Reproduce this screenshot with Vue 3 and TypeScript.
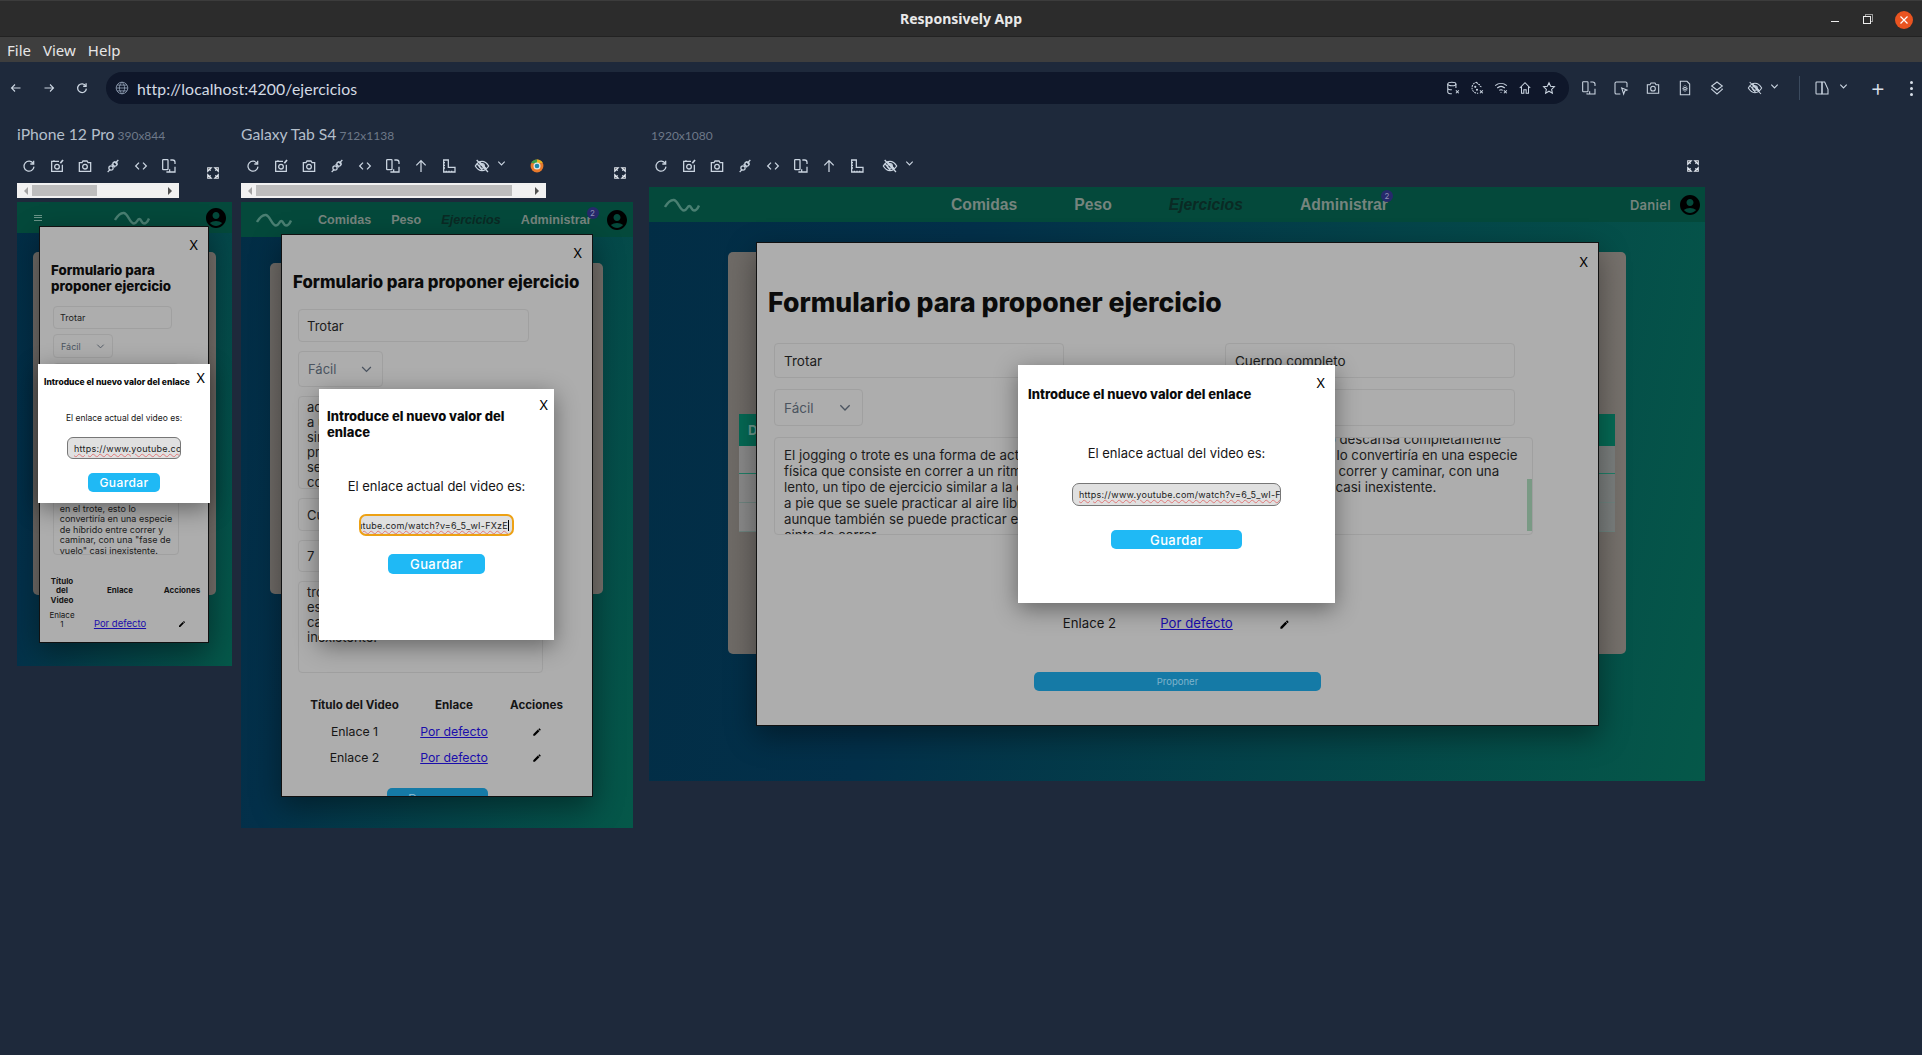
<script setup lang="ts">
const phoneTools = ['reload', 'shot', 'camera', 'plug', 'code', 'rotate']
const wideTools = ['reload', 'shot', 'camera', 'plug', 'code', 'rotate', 'up', 'ruler']
const urlIcons = ['db', 'cookie', 'wifi', 'home', 'star']

const joggingDesk = 'El jogging o trote es una forma de actividad\nfísica que consiste en correr a un ritmo\nlento, un tipo de ejercicio similar a la caminata\na pie que se suele practicar al aire libre,\naunque también se puede practicar en una\ncinta de correr'
const restDesk = 'Si la persona no descansa completamente\nen el trote, esto lo convertiría en una especie\nde híbrido entre correr y caminar, con una\n"fase de vuelo" casi inexistente.'
const joggingTab = 'actividad física que consiste\na un ritmo lento\nsimilar a la caminata\npractica al aire libre\nse puede practicar\ncorrer'
const restTab = 'trote, esto lo convertiría\nespecie de híbrido\ncaminar, con una\ninexistente.'
const restPhone = 'en el trote, esto lo\nconvertiría en una especie\nde híbrido entre correr y\ncaminar, con una "fase de\nvuelo" casi inexistente.'
const fullUrl = 'https://www.youtube.com/watch?v=6_5_wI-FXzE'
</script>

<template>
  <svg class="defs" aria-hidden="true">
    <symbol id="i-reload" viewBox="0 0 24 24"><path d="M18.5 8.5A7.5 7.5 0 1 0 19.5 13" /><path d="M19 4v5h-5" /></symbol>
    <symbol id="i-shot" viewBox="0 0 24 24"><path d="M15 5H4v15h16V10" /><circle cx="12" cy="13" r="3.5" /><path d="M7 5l1-1.5" /><path d="M17 8l4-5" stroke-width="2.6" /></symbol>
    <symbol id="i-camera" viewBox="0 0 24 24"><path d="M3.5 7h4L9 4.500h6L16.500 7h4v13h-17z" /><circle cx="12" cy="13" r="3.500" /></symbol>
    <symbol id="i-plug" viewBox="0 0 24 24"><path d="M4 21l4-4M20 3l-3 3M10 9l5 5M14 5.500l4.500 4.500" /><circle cx="9" cy="15" r="3.200" /><circle cx="15" cy="9" r="3.200" /></symbol>
    <symbol id="i-code" viewBox="0 0 24 24"><path d="M9 7l-5 5 5 5M15 7l5 5-5 5" /></symbol>
    <symbol id="i-rotate" viewBox="0 0 24 24"><rect x="2.500" y="2.500" width="8" height="15" rx="1" /><path d="M14 3h3.500a3.500 3.500 0 0 1 3.500 3.500V9" /><path d="M21 13v8H9v-1" /><path d="M13 21v-4" /></symbol>
    <symbol id="i-up" viewBox="0 0 24 24"><path d="M12 21V4M5 11l7-7 7 7" /></symbol>
    <symbol id="i-ruler" viewBox="0 0 24 24"><path d="M4 3h7v11h10v7H4z" /><path d="M4 7h2M4 11h2M4 15h2M8 21v-2M12 21v-2M16 21v-2" /></symbol>
    <symbol id="i-eye" viewBox="0 0 24 24"><path d="M2 12c3-5 6.500-7 10-7s7 2 10 7c-3 5-6.500 7-10 7s-7-2-10-7z" /><circle cx="12" cy="12" r="3.500" /><path d="M4 3l17 18M8 5.500l11 11M5 9l8 10" /></symbol>
    <symbol id="i-chev" viewBox="0 0 24 24"><path d="M5 8l7 7 7-7" /></symbol>
    <symbol id="i-full" viewBox="0 0 24 24"><path d="M3 3h6L3 9zM21 3h-6l6 6zM3 21h6l-6-6zM21 21h-6l6-6z" fill="currentColor" /><path d="M5 5l3 3M19 5l-3 3M5 19l3-3M19 19l-3-3" /></symbol>
    <symbol id="i-db" viewBox="0 0 24 24"><ellipse cx="10" cy="5" rx="7" ry="3" /><path d="M3 5v14c0 1.500 3 3 7 3M17 5v7M3 12c0 1.500 3 3 7 3" /><path d="M17 16l5 5M22 16l-5 5" /></symbol>
    <symbol id="i-cookie" viewBox="0 0 24 24"><path d="M12 2a9.500 9.500 0 1 0 2 19M12 2c0 3 2 4 4 4 0 2 2 4 4 4" stroke-dasharray="3 1.500" /><circle cx="9" cy="10" r="1" /><circle cx="12" cy="15" r="1" /><path d="M17 16l5 5M22 16l-5 5" /></symbol>
    <symbol id="i-wifi" viewBox="0 0 24 24"><path d="M2 8c6-5 14-5 20 0M5.500 12c4-3.500 9-3.500 13 0M9 16c2-1.500 4-1.500 6 0" /><path d="M12 19v1" /><path d="M17 16l5 5M22 16l-5 5" /></symbol>
    <symbol id="i-home" viewBox="0 0 24 24"><path d="M3 12l9-9 9 9M6 10v11h4v-6h4v6h4V10" /></symbol>
    <symbol id="i-star" viewBox="0 0 24 24"><path d="M12 3l2.800 6 6.500.8-4.800 4.500 1.300 6.500L12 17.500 6.200 20.800l1.300-6.500L2.700 9.800l6.500-.8z" /></symbol>
    <symbol id="i-inspect" viewBox="0 0 24 24"><path d="M11 21H5a2 2 0 0 1-2-2V5a2 2 0 0 1 2-2h14a2 2 0 0 1 2 2v6" /><path d="M13 12l8 3-3.500 1.500L16 21z" /></symbol>
    <symbol id="i-doc" viewBox="0 0 24 24"><path d="M5 2h10l4 4v16H5z" /><circle cx="12" cy="13" r="2" /><path d="M12 8v1M12 17v1M7.500 13h1M15.500 13h1M9 10l.6.6M15 10l-.6.6M9 16l.6-.6M15 16l-.6-.6" /></symbol>
    <symbol id="i-layers" viewBox="0 0 24 24"><path d="M12 3l8 6-8 6-8-6z" /><path d="M5 13l-1 1 8 7 8-7-1-1" /></symbol>
    <symbol id="i-split" viewBox="0 0 24 24"><rect x="3" y="3" width="9" height="18" rx="1" /><path d="M12 3h4l5 11v7h-9z" /></symbol>
    <symbol id="i-user" viewBox="0 0 24 24"><path fill-rule="evenodd" stroke="none" fill="currentColor" d="M12 2C6.480 2 2 6.480 2 12s4.480 10 10 10 10-4.480 10-10S17.520 2 12 2zm0 4c1.930 0 3.500 1.570 3.500 3.500S13.930 13 12 13s-3.500-1.570-3.500-3.500S10.070 6 12 6zm0 14c-2.030 0-4.430-.82-6.140-2.880C7.550 15.800 9.680 15 12 15s4.450.8 6.140 2.120C16.430 19.180 14.030 20 12 20z" /></symbol>
    <symbol id="i-pen" viewBox="0 0 24 24"><path stroke="none" fill="currentColor" d="M3 17.250V21h3.750L17.810 9.940l-3.750-3.750L3 17.250zm17.710-10.040a1 1 0 0 0 0-1.410l-2.340-2.340a1 1 0 0 0-1.410 0l-1.830 1.830 3.750 3.750 1.830-1.830z" /></symbol>
    <symbol id="i-logo" viewBox="0 0 36 14"><path d="M1 9C4 4 7 1.500 10 2c4 .7 6 10.500 10 10.500 3 0 3.500-5 5.500-4.500 2 .4 2 4.500 4.500 4.500 2.500 0 4-2.500 5-5" /></symbol>
  </svg>

  <div class="app">
    <header class="titlebar">
      <span class="title">Responsively App</span>
      <div class="winbtns">
        <i class="min"></i>
        <i class="restore"></i>
        <i class="close">
          <svg viewBox="0 0 10 10"><path d="M1.500 1.500l7 7M8.500 1.500l-7 7" /></svg>
        </i>
      </div>
    </header>
    <nav class="menubar">
      <span>File</span><span>View</span><span>Help</span>
    </nav>

    <div class="toolbar">
      <svg class="ic nav-ic" viewBox="0 0 24 24"><path d="M21 12H3M10 5l-7 7 7 7" /></svg>
      <svg class="ic nav-ic" viewBox="0 0 24 24"><path d="M3 12h18M14 5l7 7-7 7" /></svg>
      <svg class="ic nav-ic"><use href="#i-reload" /></svg>
      <div class="urlbar">
        <svg class="globe" viewBox="0 0 24 24"><circle cx="12" cy="12" r="10" /><path d="M2 12h20M3.500 7h17M3.500 17h17M12 2c-6 6-6 14 0 20M12 2c6 6 6 14 0 20" /></svg>
        <span class="url">http://localhost:4200/ejercicios</span>
        <div class="url-icons">
          <svg v-for="n in urlIcons" :key="n" class="ic small"><use :href="'#i-' + n" /></svg>
        </div>
      </div>
      <div class="top-tools">
        <svg class="ic"><use href="#i-rotate" /></svg>
        <svg class="ic"><use href="#i-inspect" /></svg>
        <svg class="ic"><use href="#i-camera" /></svg>
        <svg class="ic"><use href="#i-doc" /></svg>
        <svg class="ic"><use href="#i-layers" /></svg>
        <svg class="ic eye-top"><use href="#i-eye" /></svg>
        <svg class="chev"><use href="#i-chev" /></svg>
        <span class="divider"></span>
        <svg class="ic split"><use href="#i-split" /></svg>
        <svg class="chev"><use href="#i-chev" /></svg>
        <span class="plus">+</span>
        <span class="dots"><b></b><b></b><b></b></span>
      </div>
    </div>

    <main class="previews">
      <!-- iPhone -->
      <section class="pane phone">
        <div class="label">iPhone 12 Pro<small>390x844</small></div>
        <div class="tools">
          <svg v-for="t in phoneTools" :key="t" class="ic"><use :href="'#i-' + t" /></svg>
          <svg class="full"><use href="#i-full" /></svg>
        </div>
        <div class="hscroll"><span class="larr"></span><span class="thumb"></span><span class="rarr"></span></div>
        <div class="viewport">
          <div class="appnav">
            <span class="burger"><b></b><b></b><b></b></span>
            <svg class="logo"><use href="#i-logo" /></svg>
            <svg class="user"><use href="#i-user" /></svg>
          </div>
          <div class="card"></div>
          <div class="modal">
            <span class="x">X</span>
            <h2>Formulario para proponer ejercicio</h2>
            <div class="form">
              <div class="field f-a">Trotar</div>
              <div class="field sel f-b">Fácil<svg class="sel-chev"><use href="#i-chev" /></svg></div>
              <div class="field area f-c"><p>{{ restPhone }}</p></div>
            </div>
            <table class="links">
              <thead><tr><th>Título del Video</th><th>Enlace</th><th>Acciones</th></tr></thead>
              <tbody>
                <tr><td>Enlace 1</td><td><a>Por defecto</a></td><td><svg class="pen"><use href="#i-pen" /></svg></td></tr>
              </tbody>
            </table>
          </div>
          <div class="dialog">
            <span class="x">X</span>
            <h3>Introduce el nuevo valor del enlace</h3>
            <p class="cur">El enlace actual del video es:</p>
            <div class="linkinput"><span>{{ fullUrl }}</span></div>
            <button class="save">Guardar</button>
          </div>
        </div>
      </section>

      <!-- Tablet -->
      <section class="pane tablet">
        <div class="label">Galaxy Tab S4<small>712x1138</small></div>
        <div class="tools">
          <svg v-for="t in wideTools" :key="t" class="ic"><use :href="'#i-' + t" /></svg>
          <svg class="ic eye"><use href="#i-eye" /></svg>
          <svg class="chev"><use href="#i-chev" /></svg>
          <svg class="chrome" viewBox="0 0 24 24">
            <circle cx="12" cy="12" r="11" fill="#e8792b" />
            <path d="M12 1a11 11 0 0 1 10 6H12z" fill="#e6b422" />
            <path d="M2 7a11 11 0 0 1 10-6v7z" fill="#3ea04a" />
            <circle cx="12" cy="12" r="6" fill="#dfe7ea" />
            <circle cx="12" cy="12" r="4" fill="#1b87a8" />
          </svg>
          <svg class="full"><use href="#i-full" /></svg>
        </div>
        <div class="hscroll"><span class="larr"></span><span class="thumb"></span><span class="rarr"></span></div>
        <div class="viewport">
          <div class="appnav">
            <svg class="logo"><use href="#i-logo" /></svg>
            <div class="links-nav">
              <a>Comidas</a><a>Peso</a><a class="on">Ejercicios</a>
              <a class="adm">Administrar<em>2</em></a>
            </div>
            <svg class="user"><use href="#i-user" /></svg>
          </div>
          <div class="card"></div>
          <div class="modal">
            <span class="x">X</span>
            <h2>Formulario para proponer ejercicio</h2>
            <div class="form">
              <div class="field f-a">Trotar</div>
              <div class="field sel f-b">Fácil<svg class="sel-chev"><use href="#i-chev" /></svg></div>
              <div class="field area f-c"><p>{{ joggingTab }}</p></div>
              <div class="field f-d">Cuerpo completo</div>
              <div class="field f-e">7</div>
              <div class="field area f-f"><p>{{ restTab }}</p></div>
            </div>
            <table class="links">
              <thead><tr><th>Título del Video</th><th>Enlace</th><th>Acciones</th></tr></thead>
              <tbody>
                <tr><td>Enlace 1</td><td><a>Por defecto</a></td><td><svg class="pen"><use href="#i-pen" /></svg></td></tr>
                <tr><td>Enlace 2</td><td><a>Por defecto</a></td><td><svg class="pen"><use href="#i-pen" /></svg></td></tr>
              </tbody>
            </table>
            <button class="propose">Proponer</button>
          </div>
          <div class="dialog">
            <span class="x">X</span>
            <h3>Introduce el nuevo valor del enlace</h3>
            <p class="cur">El enlace actual del video es:</p>
            <div class="linkinput focus"><span>{{ fullUrl }}</span></div>
            <button class="save">Guardar</button>
          </div>
        </div>
      </section>

      <!-- Desktop -->
      <section class="pane desk">
        <div class="label"><small>1920x1080</small></div>
        <div class="tools">
          <svg v-for="t in wideTools" :key="t" class="ic"><use :href="'#i-' + t" /></svg>
          <svg class="ic eye"><use href="#i-eye" /></svg>
          <svg class="chev"><use href="#i-chev" /></svg>
          <svg class="full"><use href="#i-full" /></svg>
        </div>
        <div class="viewport">
          <div class="appnav">
            <svg class="logo"><use href="#i-logo" /></svg>
            <div class="links-nav">
              <a>Comidas</a><a>Peso</a><a class="on">Ejercicios</a>
              <a class="adm">Administrar<em>2</em></a>
            </div>
            <span class="who">Daniel</span>
            <svg class="user"><use href="#i-user" /></svg>
          </div>
          <div class="card">
            <div class="bgtable">
              <div class="bg-head">D</div>
              <div class="bg-row green"></div>
              <div class="bg-row"></div>
              <div class="bg-row"></div>
            </div>
          </div>
          <div class="modal">
            <span class="x">X</span>
            <h2>Formulario para proponer ejercicio</h2>
            <div class="form">
              <div class="field f-a">Trotar</div>
              <div class="field f-d">Cuerpo completo</div>
              <div class="field sel f-b">Fácil<svg class="sel-chev"><use href="#i-chev" /></svg></div>
              <div class="field f-e"></div>
              <div class="field area f-c"><p>{{ joggingDesk }}</p></div>
              <div class="field area f-f"><p>{{ restDesk }}</p><span class="sbar"></span></div>
            </div>
            <table class="links">
              <thead><tr><th>Título del Video</th><th>Enlace</th><th>Acciones</th></tr></thead>
              <tbody>
                <tr class="hidden-row"><td>Enlace 1</td><td><a>Por defecto</a></td><td><svg class="pen"><use href="#i-pen" /></svg></td></tr>
                <tr><td>Enlace 2</td><td><a>Por defecto</a></td><td><svg class="pen"><use href="#i-pen" /></svg></td></tr>
              </tbody>
            </table>
            <button class="propose">Proponer</button>
          </div>
          <div class="dialog">
            <span class="x">X</span>
            <h3>Introduce el nuevo valor del enlace</h3>
            <p class="cur">El enlace actual del video es:</p>
            <div class="linkinput"><span>{{ fullUrl }}</span></div>
            <button class="save">Guardar</button>
          </div>
        </div>
      </section>
    </main>
  </div>
</template>

<style scoped>
.defs { position: absolute; width: 0; height: 0; }

.app {
  width: 1922px;
  height: 1055px;
  background: #1e293b;
  overflow: hidden;
  font-family: Inter, "Liberation Sans", sans-serif;
  color: #111;
}

.titlebar {
  height: 37px;
  box-sizing: border-box;
  border-top: 1px solid #3c3c3c;
  background: #2c2c2c;
  border-bottom: 1px solid #222;
  display: flex;
  align-items: center;
  justify-content: center;
  position: relative;
}
.title { font: 700 14px "Noto Sans", sans-serif; color: #e9e9e9; }
.winbtns { position: absolute; right: 9px; top: 0; height: 37px; display: flex; align-items: center; }
.winbtns i { display: block; }
.min { width: 8px; height: 1px; background: #eee; margin: 4px 24px 0 0; }
.restore { width: 6px; height: 6px; border: 1px solid #eee; margin-right: 24px; box-shadow: 2px -2px 0 -1px #2c2c2c, 2px -2px 0 0 #999; }
.close { width: 18px; height: 18px; border-radius: 50%; background: #e95420; display: flex !important; align-items: center; justify-content: center; }
.close svg { width: 10px; height: 10px; fill: none; stroke: #fff; stroke-width: 1.2; }

.menubar {
  height: 25px;
  background: #3e3e3e;
  display: flex;
  align-items: center;
  gap: 12px;
  padding-left: 7px;
  font: 15px "Noto Sans", sans-serif;
  color: #e6e6e6;
}

.ic {
  width: 24px;
  height: 24px;
  padding: 4px;
  box-sizing: border-box;
  fill: none;
  stroke: #cbd5e1;
  stroke-width: 2;
  flex: none;
}
.chev { width: 11px; height: 11px; fill: none; stroke: #cbd5e1; stroke-width: 2.5; flex: none; }

.toolbar {
  height: 52px;
  padding: 10px 0 0 4px;
  box-sizing: border-box;
  display: flex;
  align-items: flex-start;
}
.toolbar > .ic { margin: 4px 9px 0 0; }
.toolbar > .nav-ic { padding: 6px; stroke-width: 2.2; }
.toolbar > .ic:nth-of-type(3) { margin-right: 12px; padding: 5px; }
.urlbar {
  width: 1463px;
  height: 32px;
  flex: none;
  border-radius: 16px;
  background: #0f172a;
  display: flex;
  align-items: center;
  padding: 0 8px 0 9px;
  box-sizing: border-box;
}
.globe { width: 14px; height: 14px; fill: none; stroke: #94a3b8; stroke-width: 1.4; }
.url { margin-left: 8px; font: 15.800px Lato, sans-serif; color: #d4dbe4; letter-spacing: .1px; }
.url-icons { margin-left: auto; display: flex; }
.ic.small { width: 24px; height: 24px; padding: 5px; stroke-width: 1.8; }
.top-tools { display: flex; align-items: center; height: 32px; margin-left: 8px; }
.top-tools > .ic { margin-right: 8px; stroke-width: 1.6; }
.top-tools > .ic.eye-top { margin: 0 2px 0 6px; }
.top-tools > .chev { margin-top: -4px; }
.divider { width: 1px; height: 24px; background: #3b4a5e; margin: 0 10px 0 19px; }
.top-tools > .ic.split { margin-right: 4px; }
.plus { margin-left: 21px; font: 300 24px/24px Inter, sans-serif; color: #d8dfe8; }
.dots { margin-left: 24px; display: flex; flex-direction: column; gap: 3px; }
.dots b { width: 3px; height: 3px; border-radius: 50%; background: #d8dfe8; }

.previews { display: flex; align-items: flex-start; padding-left: 17px; }
.pane { flex: none; padding-top: 10px; }
.phone { width: 215px; margin-right: 9px; }
.tablet { width: 392px; margin-right: 16px; }
.desk { width: 1056px; }

.label { height: 20px; font: 15.700px/20px Lato, sans-serif; color: #b4bfcb; margin-bottom: 10px; white-space: nowrap; }
.label small { font-size: 12px; color: #6d7888; margin-left: 3px; }
.desk .label small { margin-left: 2px; }

.tools { height: 29px; display: flex; align-items: flex-start; gap: 4px; }
.tools .ic { stroke-width: 1.9; padding: 4px; }
.tools .eye { margin-left: 5px; }
.tools .chev { margin: 4px 0 0 -2px; }
.chrome { width: 14px; height: 16px; margin: 4px 0 0 19px; }
.full { width: 14px; height: 14px; margin: 12px 0 0 auto; fill: none; stroke: #e2e8f0; stroke-width: 2; }
.phone .full { margin-right: 12px; }
.tablet .full { margin-right: 6px; }
.desk .tools { height: 33px; }
.desk .full { margin: 5px 5px 0 auto; }

.hscroll { height: 15px; background: #f1f1f1; display: flex; align-items: center; position: relative; margin-bottom: 4px; }
.phone .hscroll { width: 162px; }
.tablet .hscroll { width: 305px; }
.thumb { position: absolute; top: 2px; bottom: 2px; background: #bdbdbd; }
.phone .thumb { left: 15px; width: 65px; }
.tablet .thumb { left: 15px; width: 256px; }
.larr, .rarr { position: absolute; top: 4px; width: 0; height: 0; border: 4px solid transparent; }
.larr { left: 3px; border-right-color: #a3a3a3; }
.rarr { right: 3px; border-left-color: #505050; }

.viewport {
  position: relative;
  overflow: hidden;
  background: linear-gradient(102deg, #022d45 0%, #03304a 28%, #055849 100%);
}
.phone .viewport { height: 464px; }
.tablet .viewport { height: 626px; }
.desk .viewport { height: 594px; }

.appnav { display: flex; align-items: center; background: #04493b; }
.phone .appnav { height: 31px; padding: 0 4px 0 17px; }
.tablet .appnav { height: 35px; padding: 0 4px 0 15px; }
.desk .appnav { height: 35px; padding: 0 3px 0 15px; }

.logo { width: 36px; height: 14px; fill: none; stroke: #4a7f72; stroke-width: 2.4; flex: none; }
.user { width: 24px; height: 24px; color: #000; margin-left: auto; flex: none; }
.burger { display: flex; flex-direction: column; gap: 1.5px; margin-right: 72px; }
.burger b { width: 8px; height: 1px; background: #6a9488; }

.links-nav { display: flex; align-items: center; font-family: "Liberation Sans", Arial, sans-serif; font-weight: 700; color: #76847e; }
.links-nav a { white-space: nowrap; }
.links-nav .on { color: #0a2a24; font-style: italic; }
.adm { position: relative; }
.adm em {
  position: absolute;
  right: -5px;
  top: -6px;
  width: 12px;
  height: 12px;
  border-radius: 50%;
  background: #26296b;
  color: #8d90b4;
  font: 8px/12px Inter, sans-serif;
  text-align: center;
}
.tablet .links-nav { margin-left: 26px; gap: 20px; font-size: 12.600px; }
.tablet .adm em { right: -7px; }
.desk .links-nav { margin-left: 251px; gap: 57px; font-size: 15.700px; }
.who { margin-left: auto; margin-right: 7px; font-size: 13px; font-weight: 600; color: #76847e; letter-spacing: .3px; }
.desk .user { margin-left: 0; }

.card { background: linear-gradient(90deg, #6f6b67, #76716c); border-radius: 5px; overflow: hidden; }
.phone .card { margin: 19px 16px 0; height: 343px; }
.tablet .card { margin: 26px 30px 0 29px; height: 331px; }
.desk .card { margin: 30px 79px 0; height: 402px; padding: 162px 11px 0; box-sizing: border-box; }
.bg-head { height: 32px; background: #056a55; color: #6f9a90; font: 700 13px/32px Inter, sans-serif; padding-left: 9px; }
.bg-row { height: 28px; background: linear-gradient(90deg, #8b8b8b, #7b7f7e); border-bottom: 1px solid #6f8580; }
.bg-row.green { border-bottom-color: #1f8068; height: 27px; }

.modal {
  position: absolute;
  box-sizing: border-box;
  background: #adadad;
  border: 1px solid #111;
  overflow: hidden;
  box-shadow: 0 10px 28px rgba(0, 0, 0, .4);
}
.x { position: absolute; font-size: 13px; line-height: 16px; color: #000; }
.modal h2 { margin: 0; font-weight: 800; color: #0b0b0b; }
.field {
  box-sizing: border-box;
  border: 1px solid #a0a0a0;
  border-radius: 4px;
  color: #1c1c1c;
  display: flex;
  align-items: center;
  white-space: nowrap;
  overflow: hidden;
}
.sel { color: #4b5460; justify-content: space-between; }
.sel-chev { fill: none; stroke: #4b5460; stroke-width: 2; flex: none; }
.area { display: block; white-space: pre; position: relative; }
.area p { margin: 0; }
.form { display: grid; }

.links { border-collapse: collapse; margin: 0 auto; text-align: center; color: #151515; table-layout: fixed; }
.links th { font-weight: 700; }
.links td, .links th { padding: 0; box-sizing: border-box; }
.links a { color: #1a0dab; text-decoration: underline; }
.pen { color: #000; vertical-align: middle; }

.propose { display: block; margin: 0 auto; border: 0; border-radius: 5px; background: #157aa6; color: #7fb4cc; font-family: inherit; }

.dialog {
  position: absolute;
  box-sizing: border-box;
  background: #fff;
  box-shadow: 0 6px 22px rgba(0, 0, 0, .42);
  text-align: center;
}
.dialog h3 { margin: 0; text-align: left; font-weight: 800; color: #0b0b0b; }
.cur { margin: 0; color: #151515; }
.linkinput {
  box-sizing: border-box;
  margin-left: auto;
  margin-right: auto;
  background: #e0e0e0;
  border: 1px solid #777;
  border-radius: 7px;
  font-size: 9px;
  letter-spacing: .25px;
  color: #222;
  display: flex;
  align-items: center;
  overflow: hidden;
  white-space: nowrap;
  text-align: left;
}
.linkinput span { text-decoration: underline wavy rgba(224, 64, 64, .6) .5px; text-underline-offset: 1px; }
.linkinput.focus { border: 2px solid #eda114; justify-content: flex-end; padding-right: 3px; }
.linkinput.focus span { border-right: 1px solid #000; }
.save {
  display: block;
  margin-left: auto;
  margin-right: auto;
  border: 0;
  padding: 0;
  border-radius: 5px;
  background: #1fb9f5;
  color: #fff;
  font: 500 13px Inter, sans-serif;
  letter-spacing: .4px;
}

/* desktop */
.desk .modal { left: 107px; top: 55px; width: 843px; height: 484px; }
.desk .modal > .x { right: 10px; top: 11px; }
.desk .modal h2 { margin: 43px 0 0 11px; font-size: 26.600px; line-height: 32px; }
.desk .form { margin: 25px 0 0 17px; grid-template-columns: 308px 308px; column-gap: 143px; grid-template-rows: 35px 37px 98px; row-gap: 11px; font-size: 13.500px; }
.desk .field { padding: 0 9px; }
.desk .f-a, .desk .f-d, .desk .f-e { width: 290px; }
.desk .sel { width: 89px; }
.desk .sel-chev { width: 16px; height: 16px; }
.desk .area { padding: 9px 9px 0; line-height: 16px; font-size: 13.300px; }
.desk .f-f { padding-top: 0; }
.desk .f-f p { margin-top: -7px; }
.sbar { position: absolute; right: 0; top: 41px; width: 5px; height: 52px; background: #7a9a85; }
.desk .links { margin-top: 23px; width: 296px; font-size: 13.200px; }
.desk .links th:nth-child(1) { width: 120px; }
.desk .links th:nth-child(2) { width: 94px; }
.desk .links th { font-size: 12px; height: 24px; }
.desk .links td { height: 26px; }
.desk .links .hidden-row td { height: 28px; vertical-align: top; padding-top: 3px; }
.desk .pen { width: 11px; height: 11px; }
.desk .propose { margin-top: 36px; width: 287px; height: 19px; font-size: 9.500px; }
.desk .dialog { left: 369px; top: 178px; width: 317px; height: 238px; padding-top: 20px; }
.desk .dialog .x { right: 10px; top: 10px; }
.desk .dialog h3 { font-size: 13px; line-height: 18px; padding-left: 10px; }
.desk .cur { margin-top: 41px; font-size: 13px; line-height: 18px; }
.desk .linkinput { margin-top: 21px; width: 209px; height: 23px; padding-left: 6px; }
.desk .save { margin-top: 24px; width: 131px; height: 19px; }

/* tablet */
.tablet .modal { left: 40px; top: 32px; width: 312px; height: 563px; }
.tablet .modal > .x { right: 10px; top: 10px; }
.tablet .modal h2 { margin: 36px 0 0 11px; font-size: 16.800px; line-height: 22px; white-space: nowrap; }
.tablet .form { margin: 16px 0 0 16px; grid-template-columns: 245px; grid-template-rows: 33px 36px 93px 33px 32px 92px; row-gap: 9px; font-size: 13px; }
.tablet .f-a, .tablet .f-d, .tablet .f-e { width: 231px; padding: 0 8px; }
.tablet .sel { width: 85px; padding: 0 8px 0 9px; }
.tablet .sel-chev { width: 15px; height: 15px; }
.tablet .area { padding: 3px 8px 0; line-height: 15px; }
.tablet .links { margin-top: 19px; width: 276px; font-size: 12.300px; }
.tablet .links th:nth-child(1) { width: 111px; }
.tablet .links th:nth-child(2) { width: 88px; }
.tablet .links th { font-size: 11.600px; }
.tablet .links th, .tablet .links td { height: 26px; }
.tablet .pen { width: 10px; height: 10px; }
.tablet .propose { margin-top: 18px; width: 101px; height: 22px; }
.tablet .dialog { left: 78px; top: 187px; width: 235px; height: 251px; padding-top: 19px; }
.tablet .dialog .x { right: 6px; top: 8px; }
.tablet .dialog h3 { font-size: 13px; line-height: 16px; padding: 0 8px; }
.tablet .cur { margin-top: 37px; font-size: 13px; line-height: 18px; }
.tablet .linkinput { margin-top: 19px; width: 155px; height: 22px; }
.tablet .save { margin-top: 18px; width: 97px; height: 20px; }

/* phone */
.phone .modal { left: 22px; top: 24px; width: 170px; height: 417px; }
.phone .modal > .x { right: 10px; top: 10px; }
.phone .modal h2 { margin: 35px 0 0 11px; font-size: 13.300px; line-height: 16px; }
.phone .form { margin: 12px 0 0 13px; grid-template-columns: 126px; grid-template-rows: 23px 24px 192px; row-gap: 5px; font-size: 9px; }
.phone .f-a { width: 119px; padding: 0 6px; }
.phone .sel { width: 60px; padding: 0 6px 0 7px; }
.phone .sel-chev { width: 11px; height: 11px; }
.phone .area { display: flex; flex-direction: column; justify-content: flex-end; padding: 0 4px; line-height: 10.500px; font-size: 9px; }
.phone .area p { margin-bottom: -2px; }
.phone .links { width: 168px; margin-top: 17px; font-size: 8px; line-height: 9.500px; }
.phone .links th:nth-child(1) { width: 44px; }
.phone .links th:nth-child(2) { width: 72px; }
.phone .links th:nth-child(1), .phone .links td:nth-child(1) { padding: 0 9px; }
.phone .links th { height: 38px; }
.phone .links td { height: 20px; padding-top: 8px; }
.phone .links a { font-size: 9.500px; }
.phone .pen { width: 8px; height: 8px; }
.phone .dialog { left: 21px; top: 162px; width: 172px; height: 139px; padding-top: 12px; }
.phone .dialog .x { right: 5px; top: 6px; }
.phone .dialog h3 { font-size: 8.500px; line-height: 12px; padding-left: 6px; white-space: nowrap; }
.phone .cur { margin-top: 24px; font-size: 8.500px; line-height: 12px; }
.phone .linkinput { margin-top: 13px; width: 114px; height: 22px; padding-left: 6px; border-radius: 6px; }
.phone .save { margin-top: 14px; width: 72px; height: 19px; font-size: 12px; }
</style>

<style>
html, body { margin: 0; background: #1e293b; }
</style>
